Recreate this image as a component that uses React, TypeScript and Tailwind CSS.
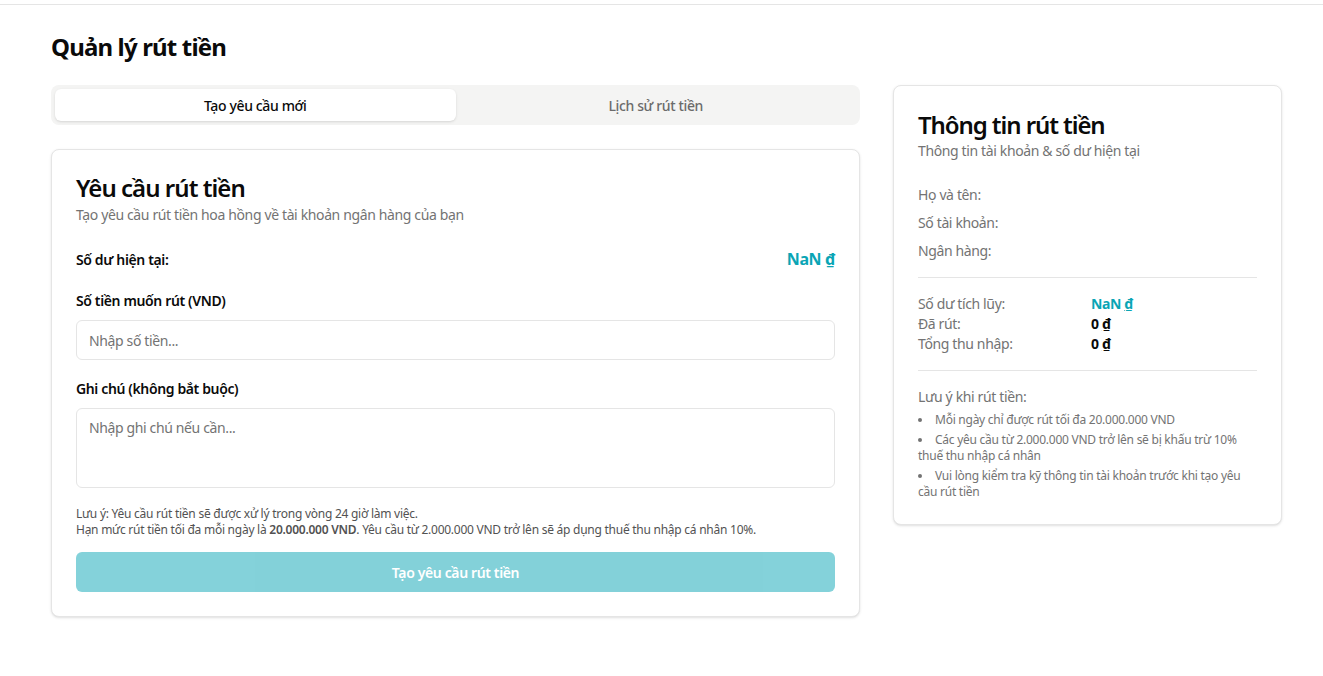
import React from "react";

export default function App() {
  return (
    <div className="min-h-[676px] bg-white text-[#0a0a0a] font-['Noto_Sans',sans-serif] tracking-[-0.023em]">
      <div className="h-[5px] border-b border-[#e5e5e5]" />
      <div className="pl-[51px] pr-[41px]">
        <h1 className="mt-[26px] text-[24px] font-bold leading-[32px] tracking-[-0.035em]">Quản lý rút tiền</h1>
        <div className="mt-[22px] flex items-start gap-[33px]">
          <div className="w-[809px]">
            <div className="flex h-[40px] items-center rounded-[8px] bg-[#f4f4f3] p-[4px]">
              <div className="flex h-[32px] flex-1 items-center justify-center rounded-[6px] bg-white text-[14px] font-medium shadow-sm">
                Tạo yêu cầu mới
              </div>
              <div className="flex h-[32px] flex-1 items-center justify-center text-[14px] font-medium text-[#6b6b6b]">
                Lịch sử rút tiền
              </div>
            </div>
            <div className="mt-[24px] rounded-[8px] border border-[#e5e5e5] bg-white p-[24px] shadow-sm">
              <h2 className="text-[24px] font-semibold leading-[28px] tracking-[-0.04em]">Yêu cầu rút tiền</h2>
              <p className="mt-[3px] text-[14px] leading-[20px] text-[#737373]">
                Tạo yêu cầu rút tiền hoa hồng về tài khoản ngân hàng của bạn
              </p>
              <div className="mt-[22px] flex items-center justify-between">
                <span className="text-[14px] font-semibold">Số dư hiện tại:</span>
                <span className="text-[16px] font-bold text-[#0aa5b5]">
                  NaN <span className="underline">₫</span>
                </span>
              </div>
              <label className="mt-[20px] block text-[14px] font-semibold leading-[20px]">Số tiền muốn rút (VND)</label>
              <input
                className="mt-[9px] h-[40px] w-full rounded-[6px] border border-[#e5e5e5] px-[12px] text-[14px] outline-none placeholder:text-[#737373]"
                placeholder="Nhập số tiền..."
              />
              <label className="mt-[19px] block text-[14px] font-semibold leading-[20px]">Ghi chú (không bắt buộc)</label>
              <textarea
                className="mt-[9px] block h-[80px] w-full resize-none rounded-[6px] border border-[#e5e5e5] px-[12px] py-[8px] text-[14px] outline-none placeholder:text-[#737373]"
                placeholder="Nhập ghi chú nếu cần..."
              />
              <div className="mt-[18px] text-[12px] leading-[16px] tracking-[-0.021em] text-[#525252]">
                <p>Lưu ý: Yêu cầu rút tiền sẽ được xử lý trong vòng 24 giờ làm việc.</p>
                <p>
                  Hạn mức rút tiền tối đa mỗi ngày là <span className="font-semibold">20.000.000 VND</span>. Yêu cầu từ 2.000.000 VND trở lên sẽ áp dụng thuế thu nhập cá nhân 10%.
                </p>
              </div>
              <button className="mt-[14px] flex h-[40px] w-full items-center justify-center rounded-[6px] bg-[#0aa5b5] text-[14px] font-semibold text-white opacity-50">
                Tạo yêu cầu rút tiền
              </button>
            </div>
          </div>
          <div className="w-[389px] rounded-[8px] border border-[#e5e5e5] bg-white p-[24px] shadow-sm">
            <h2 className="mt-[1px] text-[24px] font-semibold leading-[28px] tracking-[-0.045em]">Thông tin rút tiền</h2>
            <p className="mt-[2px] text-[14px] leading-[20px] text-[#737373]">Thông tin tài khoản &amp; số dư hiện tại</p>
            <div className="mt-[24px] flex flex-col gap-[8px] text-[14px] leading-[20px] text-[#737373]">
              <div>Họ và tên:</div>
              <div>Số tài khoản:</div>
              <div>Ngân hàng:</div>
            </div>
            <div className="my-[16px] h-px bg-[#e5e5e5]" />
            <div className="flex flex-col text-[14px] leading-[20px]">
              <div className="flex"><span className="w-[173px] text-[#737373]">Số dư tích lũy:</span><span className="font-bold text-[#0aa5b5]">NaN <span className="underline">₫</span></span></div>
              <div className="flex"><span className="w-[173px] text-[#737373]">Đã rút:</span><span className="font-bold">0 <span className="underline">₫</span></span></div>
              <div className="flex"><span className="w-[173px] text-[#737373]">Tổng thu nhập:</span><span className="font-bold">0 <span className="underline">₫</span></span></div>
            </div>
            <div className="my-[16px] h-px bg-[#e5e5e5]" />
            <p className="text-[14px] leading-[20px] text-[#737373]">Lưu ý khi rút tiền:</p>
            <ul className="mt-[5px] flex list-inside list-disc flex-col gap-[4px] pr-[14px] text-[12px] leading-[16px] tracking-[-0.021em] text-[#737373]">
              <li>Mỗi ngày chỉ được rút tối đa 20.000.000 VND</li>
              <li>Các yêu cầu từ 2.000.000 VND trở lên sẽ bị khấu trừ 10% thuế thu nhập cá nhân</li>
              <li>Vui lòng kiểm tra kỹ thông tin tài khoản trước khi tạo yêu cầu rút tiền</li>
            </ul>
          </div>
        </div>
      </div>
    </div>
  );
}
